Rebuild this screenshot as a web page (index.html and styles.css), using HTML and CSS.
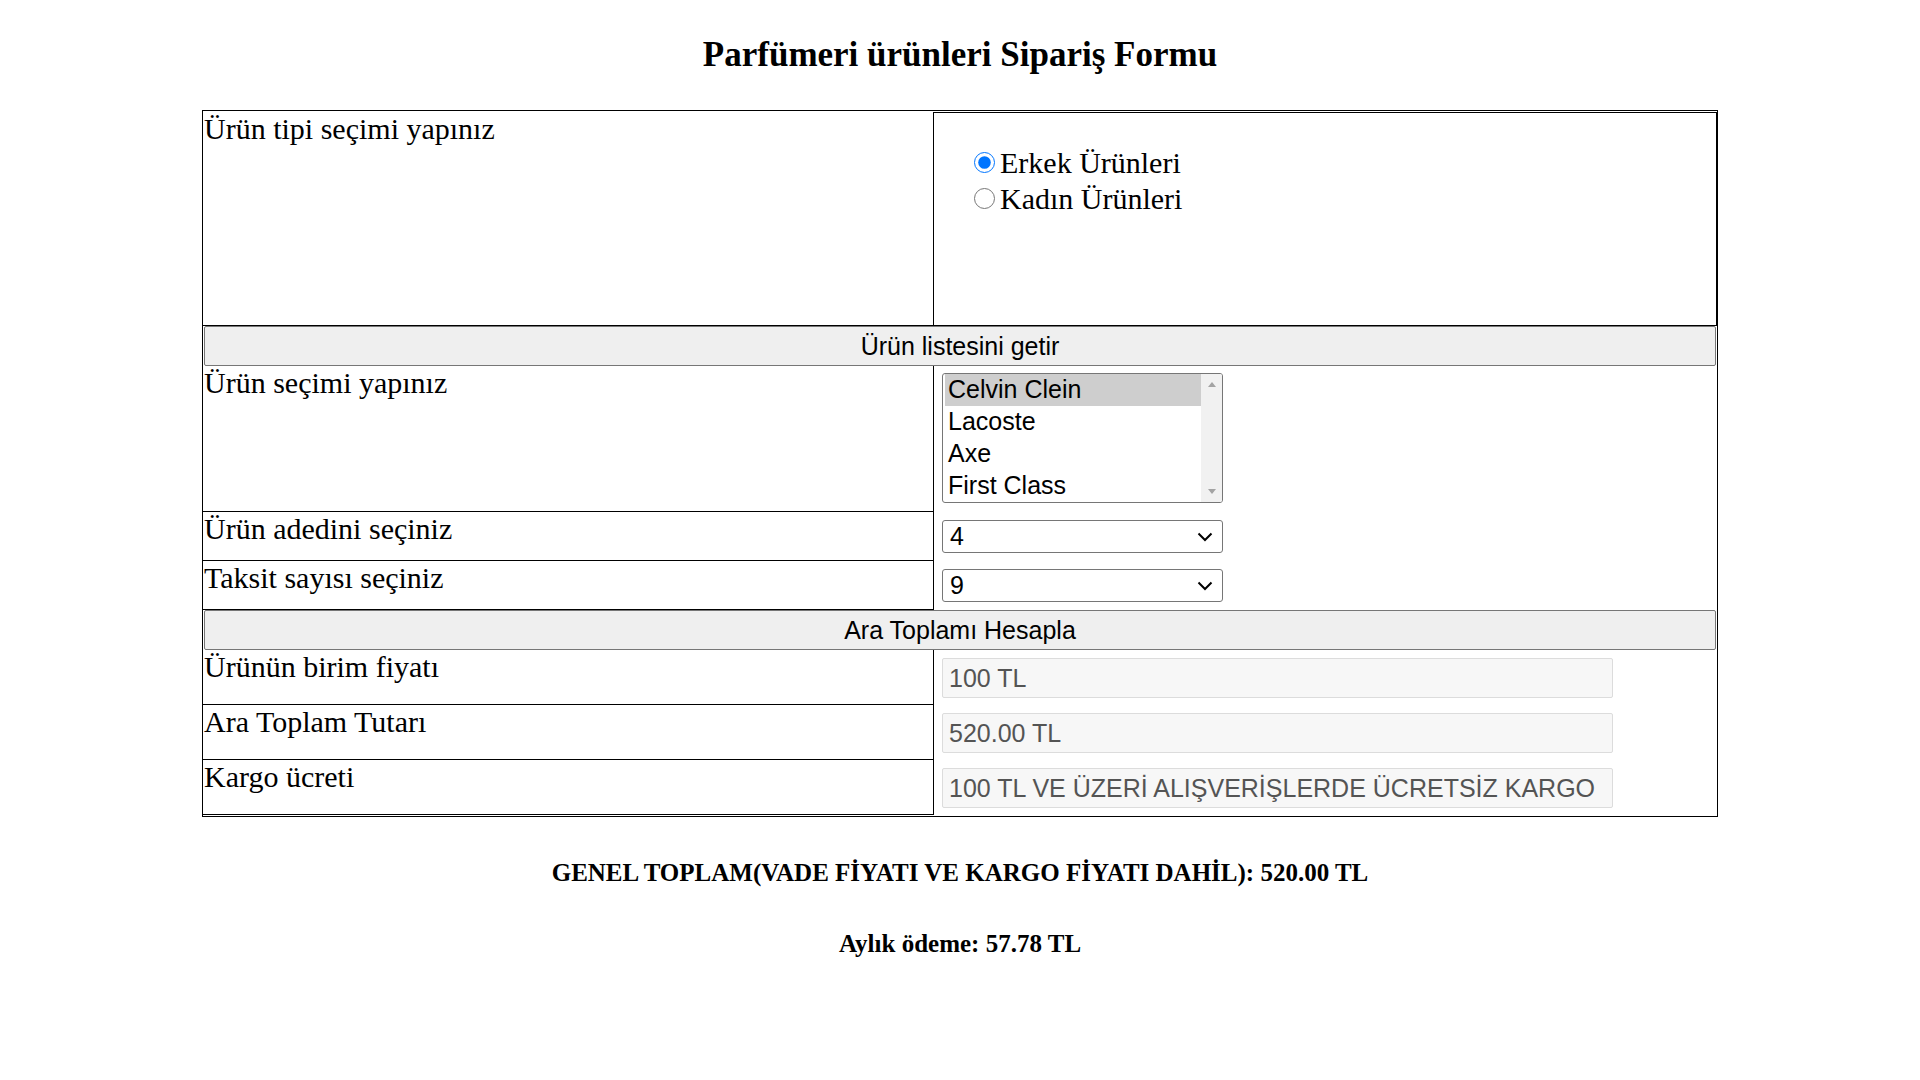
FILE: index.html
```html
<!DOCTYPE html>
<html lang="tr">
<head>
<meta charset="utf-8">
<title>Parfümeri ürünleri Sipariş Formu</title>
<link rel="stylesheet" href="styles.css">
</head>
<body>
<h3 class="title">Parfümeri ürünleri Sipariş Formu</h3>
<div class="order-table">
  <div class="cell label row-type">Ürün tipi seçimi yapınız</div>
  <div class="cell value type-box row-type">
    <label class="radio-line"><input type="radio" name="tip" checked><span>Erkek Ürünleri</span></label>
    <label class="radio-line"><input type="radio" name="tip"><span>Kadın Ürünleri</span></label>
  </div>

  <div class="button-row"><button type="button" class="wide-btn">Ürün listesini getir</button></div>

  <div class="cell label row-list">Ürün seçimi yapınız</div>
  <div class="cell value row-list">
    <div class="listbox">
      <div class="options">
        <div class="option selected">Celvin Clein</div>
        <div class="option">Lacoste</div>
        <div class="option">Axe</div>
        <div class="option">First Class</div>
      </div>
      <div class="scrollbar">
        <span class="arrow up"></span>
        <span class="arrow down"></span>
      </div>
    </div>
  </div>

  <div class="cell label row-select">Ürün adedini seçiniz</div>
  <div class="cell value row-select">
    <div class="dropdown"><span>4</span><svg class="chev" viewBox="0 0 16 10" width="16" height="10"><path d="M1.5 1.5 L8 8 L14.5 1.5" fill="none" stroke="#000" stroke-width="2"/></svg></div>
  </div>

  <div class="cell label row-select">Taksit sayısı seçiniz</div>
  <div class="cell value row-select">
    <div class="dropdown"><span>9</span><svg class="chev" viewBox="0 0 16 10" width="16" height="10"><path d="M1.5 1.5 L8 8 L14.5 1.5" fill="none" stroke="#000" stroke-width="2"/></svg></div>
  </div>

  <div class="button-row"><button type="button" class="wide-btn">Ara Toplamı Hesapla</button></div>

  <div class="cell label row-input">Ürünün birim fiyatı</div>
  <div class="cell value row-input"><input class="ro-input" type="text" value="100 TL" readonly></div>

  <div class="cell label row-input">Ara Toplam Tutarı</div>
  <div class="cell value row-input"><input class="ro-input" type="text" value="520.00 TL" readonly></div>

  <div class="cell label row-input">Kargo ücreti</div>
  <div class="cell value row-input"><input class="ro-input" type="text" value="100 TL VE ÜZERİ ALIŞVERİŞLERDE ÜCRETSİZ KARGO" readonly></div>
</div>

<h4 class="total">GENEL TOPLAM(VADE FİYATI VE KARGO FİYATI DAHİL): 520.00 TL</h4>
<h4 class="total monthly">Aylık ödeme: 57.78 TL</h4>
</body>
</html>
```

FILE: styles.css
```css
html, body {
  margin: 0;
  padding: 0;
  background: #fff;
}
body {
  font-family: "Liberation Serif", "Times New Roman", serif;
  font-size: 30px;
  color: #000;
}
.title {
  font-size: 35px;
  font-weight: bold;
  line-height: 40px;
  text-align: center;
  margin: 35px 0 35px;
}
.order-table {
  box-sizing: border-box;
  width: 1516px;
  margin: 0 auto;
  border: 1px solid #000;
  padding: 1px 0;
  display: grid;
  grid-template-columns: 730px 784px;
}
.cell {
  box-sizing: border-box;
}
.label {
  padding: 0 1px;
  line-height: 34px;
  border-bottom: 1px solid #000;
}
.value {
  border-left: 1px solid #000;
  padding: 7px 8px 0;
}
.row-type { height: 214px; }
.type-box {
  border: 1px solid #000;
  padding: 32px 0 0 40px;
}
.radio-line {
  display: flex;
  align-items: center;
  height: 35.5px;
  line-height: 35px;
}
.radio-line input {
  width: 21px;
  height: 21px;
  margin: 0 5px 0 0;
  accent-color: #0075ff;
}
.button-row {
  grid-column: 1 / -1;
  display: flex;
  padding: 0 1px;
}
.wide-btn {
  flex: 1;
  height: 40px;
  margin: 0;
  font-family: "Liberation Sans", Arial, sans-serif;
  font-size: 25px;
  color: #000;
  background: #efefef;
  border: 1px solid #767676;
  border-radius: 2px;
  padding: 0;
}
.row-list { height: 146px; }
.row-select { height: 49px; }
.row-input { height: 55px; }

.listbox {
  box-sizing: border-box;
  display: flex;
  width: 281px;
  height: 130px;
  border: 1px solid #767676;
  border-radius: 3px;
  font-family: "Liberation Sans", Arial, sans-serif;
  font-size: 25px;
  overflow: hidden;
}
.options {
  flex: 1;
  padding: 0 0 0 2px;
}
.option {
  height: 32px;
  line-height: 31px;
  padding: 0 3px;
}
.option.selected {
  background: #cecece;
}
.scrollbar {
  width: 21px;
  background: #f1f1f1;
  display: flex;
  flex-direction: column;
  justify-content: space-between;
  align-items: center;
  padding: 8px 0;
}
.arrow {
  width: 0;
  height: 0;
  border-left: 4px solid transparent;
  border-right: 4px solid transparent;
}
.arrow.up { border-bottom: 5px solid #a3a3a3; }
.arrow.down { border-top: 5px solid #a3a3a3; }

.dropdown {
  box-sizing: border-box;
  width: 281px;
  height: 33px;
  margin-top: 1px;
  border: 1px solid #767676;
  border-radius: 3px;
  display: flex;
  align-items: center;
  justify-content: space-between;
  padding: 0 9px 0 7px;
  font-family: "Liberation Sans", Arial, sans-serif;
  font-size: 25px;
}
.ro-input {
  box-sizing: border-box;
  width: 671px;
  height: 40px;
  margin: 1px 0 0;
  padding: 0 6px;
  font-family: "Liberation Sans", Arial, sans-serif;
  font-size: 25px;
  color: #545454;
  background: #f7f7f7;
  border: 1px solid #dcdcdc;
  border-radius: 2px;
  outline: none;
}
.total {
  font-size: 25px;
  font-weight: bold;
  text-align: center;
  margin: 41px 0 0;
  line-height: 29px;
}
.monthly {
  margin-top: 42px;
}
```
